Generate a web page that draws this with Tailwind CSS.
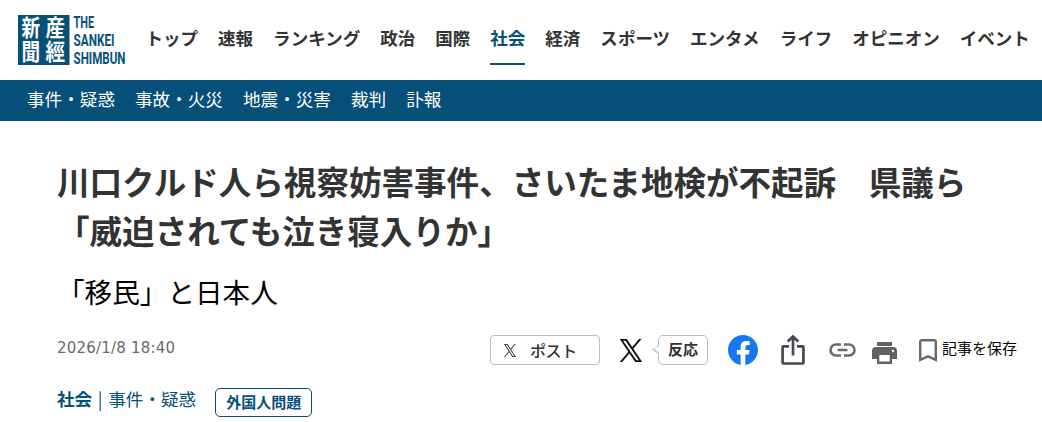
<!DOCTYPE html>
<html lang="ja">
<head>
  <meta charset="UTF-8" />
  <title>産経ニュース</title>
  <script src="https://cdn.jsdelivr.net/npm/@tailwindcss/browser@4"></script>
</head>
<body class="h-[422px] overflow-hidden bg-white font-['Noto_Sans_CJK_JP',sans-serif] text-[#333]">
  <!-- Header -->
  <header class="flex h-20 items-start pl-[18px]">
    <a href="#" class="mt-[15px] block w-[127px] shrink-0">
      <svg class="overflow-visible" width="110" height="51" viewBox="0 0 110 51">
        <rect width="51.5" height="50" fill="#07507a" />
        <g fill="#fff" font-family="Noto Sans CJK JP" font-weight="700" font-size="20">
          <text transform="translate(3.5 21) scale(.93 1.13)">新</text>
          <text transform="translate(3.5 44.5) scale(.93 1.13)">聞</text>
          <text transform="translate(27.5 21) scale(.98 1.13)">産</text>
          <text transform="translate(27.5 44.5) scale(.98 1.13)">經</text>
        </g>
        <g fill="#07507a" font-family="Roboto" font-weight="700" font-size="16.4">
          <text x="55.5" y="12.6" textLength="20.5" lengthAdjust="spacingAndGlyphs">THE</text>
          <text x="55.5" y="31" textLength="41" lengthAdjust="spacingAndGlyphs">SANKEI</text>
          <text x="55.5" y="49" textLength="52" lengthAdjust="spacingAndGlyphs">SHIMBUN</text>
        </g>
      </svg>
    </a>
    <nav class="mt-[11px] flex gap-5 pl-[0.5px] text-[17.52px] leading-[54px] font-bold whitespace-nowrap">
      <a href="#">トップ</a>
      <a href="#">速報</a>
      <a href="#">ランキング</a>
      <a href="#">政治</a>
      <a href="#">国際</a>
      <a href="#" class="h-[54px] border-b-2 border-[#07507a] text-[#07507a]">社会</a>
      <a href="#">経済</a>
      <a href="#">スポーツ</a>
      <a href="#">エンタメ</a>
      <a href="#">ライフ</a>
      <a href="#">オピニオン</a>
      <a href="#">イベント</a>
    </nav>
  </header>

  <!-- Sub navigation -->
  <nav class="flex h-[41px] gap-5 bg-[#07507a] pl-[27px] text-[17.6px] leading-[37px] text-white">
    <a href="#">事件・疑惑</a>
    <a href="#">事故・火災</a>
    <a href="#">地震・災害</a>
    <a href="#">裁判</a>
    <a href="#">訃報</a>
  </nav>

  <!-- Article -->
  <main class="pt-[35px] pl-[57px]">
    <h1 class="text-[32.55px] leading-[49px] font-bold whitespace-nowrap">川口クルド人ら視察妨害事件、さいたま地検が不起訴　県議ら<br />「威迫されても泣き寝入りか」</h1>
    <h2 class="mt-[17px] text-[27.6px] leading-[40px] text-black">「移民」と日本人</h2>

    <div class="mt-[19px] flex h-[40px] items-start">
      <time class="mt-[8px] w-[433px] font-['DejaVu_Sans',sans-serif] text-[15px] leading-5 tracking-[0.2px] text-[#6a6a6a]">2026/1/8 18:40</time>

      <button class="mt-[5px] flex h-[30px] w-[110px] items-center rounded-[4px] border border-[#bbb] pl-[13px] text-[16px] font-medium tracking-[-0.4px]">
        <svg class="mr-[14px]" width="12" height="13" viewBox="0 0 24 24" preserveAspectRatio="none" fill="#222"><path d="M14.27 10.16 23.18 0h-2.11l-7.74 8.82L7.15 0H0l9.35 13.34L0 24h2.11l8.18-9.32L16.82 24h7.13zM11.37 13.46l-.95-1.33L2.88 1.56h3.24l6.09 8.53.95 1.32 7.91 11.09h-3.25z" /></svg>
        <span>ポスト</span>
      </button>

      <svg class="mt-[9px] ml-[20px]" width="22" height="23" viewBox="0 0 24 24" preserveAspectRatio="none" fill="#000" stroke="#000" stroke-width=".4"><path d="M14.27 10.16 23.18 0h-2.11l-7.74 8.82L7.15 0H0l9.35 13.34L0 24h2.11l8.18-9.32L16.82 24h7.13zM11.37 13.46l-.95-1.33L2.88 1.56h3.24l6.09 8.53.95 1.32 7.91 11.09h-3.25z" /></svg>
      <div class="mt-[5px] ml-[10px] flex">
        <svg class="z-10 mt-[10px] -mr-px" width="7" height="10" viewBox="0 0 7 10"><path d="M0 4.5 7 .5v9z" fill="#c4c4c4" /><path d="M2.2 4 7 1.5v6z" fill="#fff" /></svg>
        <span class="h-[30px] w-[50px] rounded-[5px] border border-[#bbb] text-center text-[15px] leading-[25px] font-bold">反応</span>
      </div>

      <svg class="mt-[5px] ml-5" width="30" height="30" viewBox="0 0 24 24"><path fill="#1877f2" d="M24 12.07C24 5.4 18.63 0 12 0S0 5.4 0 12.07C0 18.1 4.39 23.1 10.13 24v-8.44H7.08v-3.49h3.05V9.41c0-3.02 1.79-4.69 4.53-4.69 1.31 0 2.68.24 2.68.24v2.97h-1.51c-1.49 0-1.95.93-1.95 1.88v2.26h3.32l-.53 3.49h-2.79V24C19.61 23.1 24 18.1 24 12.07z" /></svg>
      <svg class="mt-[5px] ml-[23px]" width="24" height="30" viewBox="0 0 24 30" fill="none" stroke="#494750" stroke-width="2.7"><path d="M8 11.3H2.4a.8.8 0 0 0-.8.8v15.6a.8.8 0 0 0 .8.8h19.2a.8.8 0 0 0 .8-.8V12.1a.8.8 0 0 0-.8-.8H16M12 20.5V2M6.7 6.5 12 1.5l5.3 5" /></svg>
      <svg class="mt-[13px] ml-6" width="27" height="14" viewBox="0 0 27 14" fill="none" stroke="#6b6b6b" stroke-width="2.6"><path d="M12 1.5H7a5.5 5.5 0 0 0 0 11h5M15 1.5h5a5.5 5.5 0 0 1 0 11h-5M8.5 7h10" /></svg>
      <svg class="mt-[12px] ml-4" width="25" height="22" viewBox="0 0 25 22"><path fill="#616161" d="M5 0h15v4H5zM4 5h17a4 4 0 0 1 4 4v8h-5v5H5v-5H0V9a4 4 0 0 1 4-4z" /><path fill="#fff" d="M7.3 13h10.4v6.5H7.3z" /><circle cx="21" cy="9" r="1.2" fill="#fff" /></svg>
      <svg class="mt-[9px] ml-[22px]" width="18" height="23" viewBox="0 0 18 23" fill="none" stroke="#686868" stroke-width="2.4"><path d="M1.2 20.8V2.8a1.6 1.6 0 0 1 1.6-1.6h12.4a1.6 1.6 0 0 1 1.6 1.6v18L9 17.4z" /></svg>
      <span class="mt-[7px] ml-[5px] text-[15px] leading-[22px] whitespace-nowrap text-black">記事を保存</span>
    </div>

    <div class="mt-[13px] flex h-[34px] items-start text-[17.6px] leading-[31px] text-[#07507a]">
      <a href="#" class="font-bold">社会</a>
      <span class="w-[16px] text-center">|</span>
      <a href="#">事件・疑惑</a>
      <a href="#" class="mt-[5px] ml-[19px] h-[29px] w-[97px] rounded-[5px] border border-[#07507a] text-center text-[15px] leading-[25px] font-bold">外国人問題</a>
    </div>
  </main>
</body>
</html>
